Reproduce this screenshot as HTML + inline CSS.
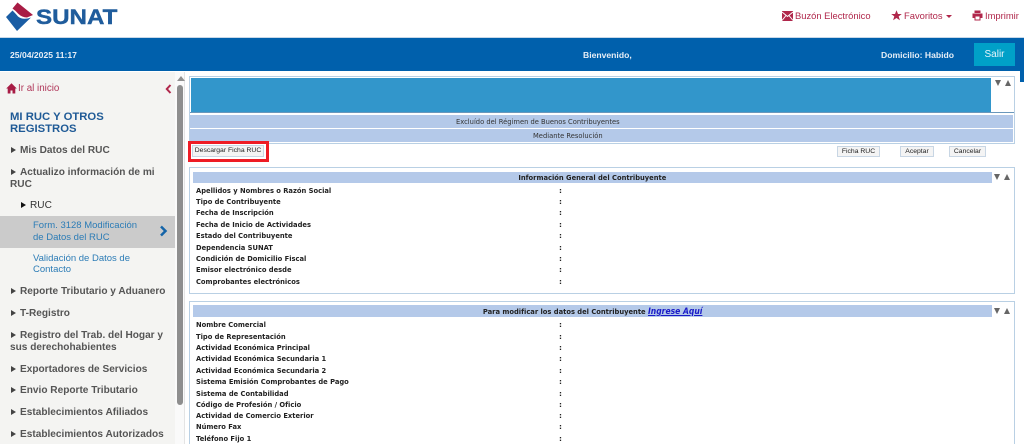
<!DOCTYPE html>
<html lang="es"><head><meta charset="utf-8"><title>SUNAT</title>
<style>
html,body{margin:0;padding:0;width:1024px;height:444px;overflow:hidden;background:#fff;font-family:"Liberation Sans",sans-serif}
#w{position:relative;width:1024px;height:444px;overflow:hidden}
.a{position:absolute;white-space:nowrap}
.top{color:#b0274b;font-size:9.4px;line-height:14px}
.m{position:absolute;left:10px;width:160px;font-size:10.1px;font-weight:bold;line-height:12.500px;color:#555}
.m i{display:inline-block;width:0;height:0;border-left:5px solid #444;border-top:3px solid transparent;border-bottom:3px solid transparent;margin:0 4px 0 1px;vertical-align:0}
.s{position:absolute;left:33px;font-size:9.500px;line-height:11.500px;color:#2c7cb6;white-space:nowrap}
.l{position:absolute;left:196px;font:bold 7.400px/10px "DejaVu Sans",sans-serif;color:#222;white-space:nowrap;transform:scaleX(.91);transform-origin:0 0}
.c{position:absolute;left:559px;font:bold 7.400px/10px "DejaVu Sans",sans-serif;color:#222}
.p{position:absolute;left:189px;width:824px;border:1px solid #b9d0e4;box-sizing:content-box}
.bar{position:absolute;background:#b4c9e9;height:13px}
.bt{position:absolute;font:7.400px/13px "DejaVu Sans",sans-serif;color:#333;white-space:nowrap;transform:scaleX(.91);transform-origin:0 0}
.h{position:absolute;left:193px;width:799px;background:#b4c9e9;text-align:center;font:bold 7.400px/12px "DejaVu Sans",sans-serif;color:#222;white-space:nowrap}
.h span.z{display:inline-block;transform:scaleX(.91)}
.b{position:absolute;top:146px;height:9px;border:1px solid #c8d6e4;background:#f4f4f4;font-size:6.800px;line-height:9px;text-align:center;color:#222;box-sizing:content-box;white-space:nowrap}
.d,.u{position:absolute;width:0;height:0;border-left:3px solid transparent;border-right:3px solid transparent}
.d{border-top:6px solid #666}
.u{border-bottom:6px solid #666}
</style></head><body><div id="w">

<svg class="a" style="left:0;top:0" width="40" height="34" viewBox="0 0 40 34">
<path d="M17.500 2.500L33 15L27 17.500Q22 17.500 18 13.500Q16 11 12.500 8.500Z" fill="#a81c45"/>
<path d="M6 17L12.500 10.500Q16 14 18 16.500Q23 20.500 31 17.500L17 31Z" fill="#1a5da4"/>
</svg>
<div class="a" style="left:36px;top:5px;font-size:21px;line-height:25px;font-weight:bold;color:#1f5c9c;-webkit-text-stroke:.4px #1f5c9c;transform:scaleX(1.150);transform-origin:0 0">SUNAT</div>

<svg class="a" style="left:782px;top:11px" width="11" height="10" viewBox="0 0 11 10"><rect width="11" height="10" fill="#b0274b"/><path d="M0 1L5.500 5.500L11 1M0 9.500L4 4.500M11 9.500L7 4.500" stroke="#fff" fill="none" stroke-width="1"/></svg>
<div class="a top" style="left:795px;top:9px">Buzón Electrónico</div>
<svg class="a" style="left:891px;top:10px" width="11" height="11" viewBox="0 0 11 11"><path d="M5.500 0.300L7 4H10.800L7.700 6.400L8.900 10.300L5.500 8L2.100 10.300L3.300 6.400L0.200 4H4Z" fill="#b0274b"/></svg>
<div class="a top" style="left:904px;top:9px">Favoritos</div>
<div class="a" style="left:946px;top:15px;width:0;height:0;border-top:3px solid #b0274b;border-left:3px solid transparent;border-right:3px solid transparent"></div>
<svg class="a" style="left:972px;top:10px" width="11" height="11" viewBox="0 0 11 11"><path d="M2.500 0.500H8.500V3H2.500ZM0.500 3.500H10.500V8H8.500V10.500H2.500V8H0.500Z" fill="#b0274b"/><rect x="3.500" y="6.500" width="4" height="3" fill="#fff"/></svg>
<div class="a top" style="left:985px;top:9px">Imprimir</div>

<div class="a" style="left:0;top:37px;width:1024px;height:1px;background:#c8d8e8"></div>
<div class="a" style="left:0;top:38px;width:1024px;height:33px;background:#0060ac"></div>
<div class="a" style="left:1020px;top:38px;width:4px;height:44px;background:#0060ac"></div>
<div class="a" style="left:10px;top:49px;font-size:8.600px;line-height:12px;font-weight:bold;color:#e6eef6">25/04/2025 11:17</div>
<div class="a" style="left:583px;top:49px;font-size:8.600px;line-height:12px;font-weight:bold;color:#e6eef6">Bienvenido,</div>
<div class="a" style="left:881px;top:49px;font-size:8.600px;line-height:12px;font-weight:bold;color:#e6eef6">Domicilio: Habido</div>
<div class="a" style="left:974px;top:43px;width:41px;height:23px;background:#00a0c8;color:#e6f4fa;font-size:10px;line-height:23px;text-align:center">Salir</div>

<div class="a" style="left:0;top:72px;width:175px;height:372px;background:#f4f4f2"></div>
<div class="a" style="left:175px;top:72px;width:9px;height:372px;background:#fafafa"></div>
<div class="a" style="left:184px;top:72px;width:1px;height:372px;background:#e4e4e4"></div>
<div class="a" style="left:176.500px;top:76px;width:0;height:0;border-bottom:5px solid #909090;border-left:4px solid transparent;border-right:4px solid transparent"></div>
<div class="a" style="left:177px;top:85px;width:6px;height:320px;background:#8e8e8e;border-radius:3px"></div>

<svg class="a" style="left:6px;top:83px" width="11" height="11" viewBox="0 0 11 11"><path d="M5.500 0.300L10.800 5.500H9.300V10.500H6.500V7.500H4.500V10.500H1.700V5.500H0.200Z" fill="#a81c45"/></svg>
<div class="a" style="left:18px;top:82px;font-size:9.800px;line-height:13px;color:#b0375a">Ir al inicio</div>
<svg class="a" style="left:165px;top:84px" width="7" height="10" viewBox="0 0 7 10"><path d="M5.500 1L1.800 5L5.500 9" fill="none" stroke="#b0274b" stroke-width="2"/></svg>
<div class="a" style="left:10px;top:111px;font-size:11.300px;line-height:12px;font-weight:bold;color:#1f5a96">MI RUC Y OTROS<br>REGISTROS</div>

<div class="m" style="top:144.500px"><i></i>Mis Datos del RUC</div>
<div class="m" style="top:166.500px"><i></i>Actualizo información de mi<br>RUC</div>
<div class="m" style="left:20px;top:199.500px;font-weight:normal;color:#333"><i style="border-left-color:#111"></i>RUC</div>
<div class="a" style="left:0;top:216px;width:175px;height:32px;background:#cbcbcb"></div>
<div class="s" style="top:220px">Form. 3128 Modificación<br>de Datos del RUC</div>
<svg class="a" style="left:159px;top:225px" width="9" height="12" viewBox="0 0 9 12"><path d="M2 1.500L6.500 6L2 10.500" fill="none" stroke="#1464a8" stroke-width="2.500"/></svg>
<div class="s" style="top:252.500px">Validación de Datos de<br>Contacto</div>
<div class="m" style="top:285.500px"><i></i>Reporte Tributario y Aduanero</div>
<div class="m" style="top:307.500px"><i></i>T-Registro</div>
<div class="m" style="top:329.500px"><i></i>Registro del Trab. del Hogar y<br>sus derechohabientes</div>
<div class="m" style="top:363.500px"><i></i>Exportadores de Servicios</div>
<div class="m" style="top:384.500px"><i></i>Envio Reporte Tributario</div>
<div class="m" style="top:406.500px"><i></i>Establecimientos Afiliados</div>
<div class="m" style="top:428.500px"><i></i>Establecimientos Autorizados</div>

<div class="p" style="top:76px;height:66px"></div>
<div class="a" style="left:191px;top:78px;width:800px;height:34px;background:#3296cb"></div>
<div class="a" style="left:190px;top:112px;width:824px;height:1px;background:#6a97bb"></div>
<div class="bar" style="left:190px;top:115px;width:823px"></div>
<div class="bt" style="left:456px;top:115px">Excluído del Régimen de Buenos Contribuyentes</div>
<div class="bar" style="left:190px;top:129px;width:823px"></div>
<div class="bt" style="left:533px;top:129px">Mediante Resolución</div>
<div class="d" style="left:995px;top:80px"></div><div class="u" style="left:1005px;top:80px"></div>

<div class="a" style="left:188px;top:141px;width:75px;height:15px;border:3px solid #ee1c25"></div>
<div class="b" style="left:192px;top:145px;width:70px;height:10px;line-height:10px">Descargar Ficha RUC</div>
<div class="b" style="left:837px;width:41px">Ficha RUC</div>
<div class="b" style="left:900px;width:32px">Aceptar</div>
<div class="b" style="left:949px;width:35px">Cancelar</div>

<div class="p" style="top:167px;height:125px"></div>
<div class="h" style="top:172px;height:11px"><span class="z">Información General del Contribuyente</span></div>
<div class="d" style="left:994px;top:174px"></div><div class="u" style="left:1004px;top:174px"></div>
<div class="l" style="top:186px">Apellidos y Nombres o Razón Social</div><div class="c" style="top:186px">:</div>
<div class="l" style="top:197px">Tipo de Contribuyente</div><div class="c" style="top:197px">:</div>
<div class="l" style="top:208px">Fecha de Inscripción</div><div class="c" style="top:208px">:</div>
<div class="l" style="top:220px">Fecha de Inicio de Actividades</div><div class="c" style="top:220px">:</div>
<div class="l" style="top:231px">Estado del Contribuyente</div><div class="c" style="top:231px">:</div>
<div class="l" style="top:243px">Dependencia SUNAT</div><div class="c" style="top:243px">:</div>
<div class="l" style="top:254px">Condición de Domicilio Fiscal</div><div class="c" style="top:254px">:</div>
<div class="l" style="top:265px">Emisor electrónico desde</div><div class="c" style="top:265px">:</div>
<div class="l" style="top:277px">Comprobantes electrónicos</div><div class="c" style="top:277px">:</div>

<div class="p" style="top:301px;height:160px"></div>
<div class="h" style="top:305px;height:12px"><span class="z">Para modificar los datos del Contribuyente <span style="color:#1a1ac8;text-decoration:underline;font-style:italic;font-size:8.400px">Ingrese Aquí</span></span></div>
<div class="d" style="left:994px;top:308px"></div><div class="u" style="left:1004px;top:308px"></div>
<div class="l" style="top:320px">Nombre Comercial</div><div class="c" style="top:320px">:</div>
<div class="l" style="top:332px">Tipo de Representación</div><div class="c" style="top:332px">:</div>
<div class="l" style="top:343px">Actividad Económica Principal</div><div class="c" style="top:343px">:</div>
<div class="l" style="top:354px">Actividad Económica Secundaria 1</div><div class="c" style="top:354px">:</div>
<div class="l" style="top:366px">Actividad Económica Secundaria 2</div><div class="c" style="top:366px">:</div>
<div class="l" style="top:377px">Sistema Emisión Comprobantes de Pago</div><div class="c" style="top:377px">:</div>
<div class="l" style="top:389px">Sistema de Contabilidad</div><div class="c" style="top:389px">:</div>
<div class="l" style="top:400px">Código de Profesión / Oficio</div><div class="c" style="top:400px">:</div>
<div class="l" style="top:411px">Actividad de Comercio Exterior</div><div class="c" style="top:411px">:</div>
<div class="l" style="top:422px">Número Fax</div><div class="c" style="top:422px">:</div>
<div class="l" style="top:434px">Teléfono Fijo 1</div><div class="c" style="top:434px">:</div>
</div></body></html>
